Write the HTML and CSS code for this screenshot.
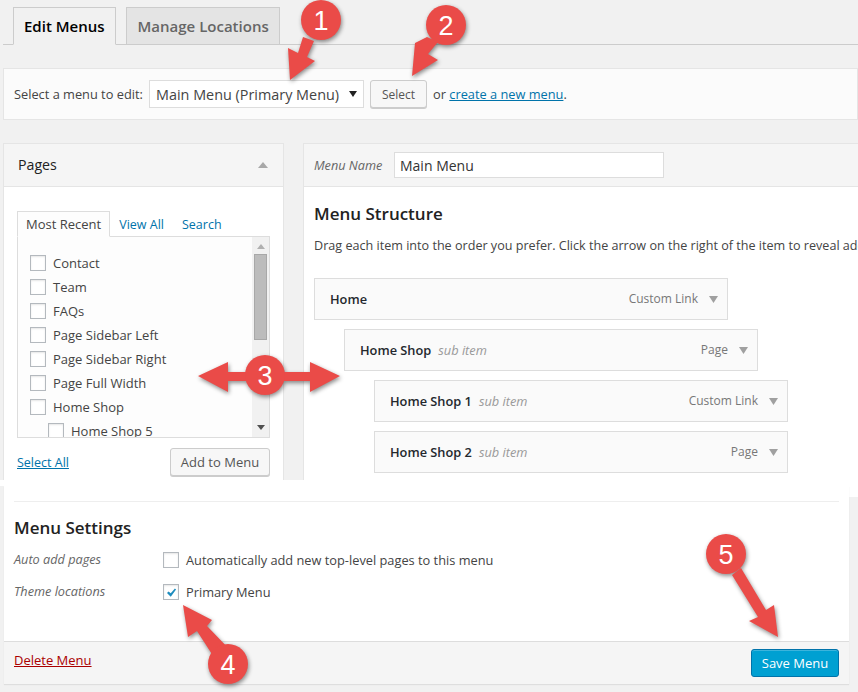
FILE: index.html
```html
<!DOCTYPE html>
<html lang="en">
<head>
    <meta charset="UTF-8">
    <meta name="viewport" content="width=device-width, initial-scale=1.0">
    <title>Edit Menus</title>
    <link rel="stylesheet" href="styles.css">
</head>
<body>
    <div class="top">
        <div class="nav-tabs">
            <a class="nav-tab active">Edit Menus</a>
            <a class="nav-tab">Manage Locations</a>
        </div>

        <div class="select-bar">
            <span class="select-label">Select a menu to edit:</span>
            <div class="select">
                <span>Main Menu (Primary Menu)</span>
                <svg width="8" height="6" viewBox="0 0 8 6"><path d="M0 0h8L4 6z" fill="#222"/></svg>
            </div>
            <button class="btn btn-select">Select</button>
            <span>or <a class="link">create a new menu</a>.</span>
        </div>

        <div class="columns">
            <div class="side-box">
                <div class="box-head">
                    <h3>Pages</h3>
                    <svg width="10" height="6" viewBox="0 0 10 6"><path d="M0 6h10L5 0z" fill="#a8a8a8"/></svg>
                </div>
                <div class="side-body">
                    <div class="mini-tabs">
                        <span class="mini-tab active">Most Recent</span>
                        <span class="mini-tab">View All</span>
                        <span class="mini-tab">Search</span>
                    </div>
                    <div class="list-box">
                        <ul class="page-list">
                            <li><span class="cb"></span>Contact</li>
                            <li><span class="cb"></span>Team</li>
                            <li><span class="cb"></span>FAQs</li>
                            <li><span class="cb"></span>Page Sidebar Left</li>
                            <li><span class="cb"></span>Page Sidebar Right</li>
                            <li><span class="cb"></span>Page Full Width</li>
                            <li><span class="cb"></span>Home Shop</li>
                            <li class="child"><span class="cb"></span>Home Shop 5</li>
                        </ul>
                        <div class="scrollbar">
                            <svg width="8" height="5" viewBox="0 0 8 5"><path d="M0 5h8L4 0z" fill="#b0b0b0"/></svg>
                            <div class="thumb"></div>
                            <svg class="scroll-down" width="8" height="5" viewBox="0 0 8 5"><path d="M0 0h8L4 5z" fill="#505050"/></svg>
                        </div>
                    </div>
                    <div class="side-actions">
                        <a class="link">Select All</a>
                        <button class="btn btn-add">Add to Menu</button>
                    </div>
                </div>
            </div>

            <div class="main-box">
                <div class="box-head name-head">
                    <label>Menu Name</label>
                    <input class="name-input" type="text" value="Main Menu">
                </div>
                <div class="main-body">
                    <h3 class="heading">Menu Structure</h3>
                    <p class="hint">Drag each item into the order you prefer. Click the arrow on the right of the item to reveal additional configuration options.</p>
                    <div class="item">
                        <b>Home</b>
                        <span class="item-type">Custom Link</span>
                        <svg width="9" height="7" viewBox="0 0 9 7"><path d="M0 0h9L4.5 7z" fill="#a0a0a0"/></svg>
                    </div>
                    <div class="item depth-1">
                        <b>Home Shop</b><i>sub item</i>
                        <span class="item-type">Page</span>
                        <svg width="9" height="7" viewBox="0 0 9 7"><path d="M0 0h9L4.5 7z" fill="#a0a0a0"/></svg>
                    </div>
                    <div class="item depth-2">
                        <b>Home Shop 1</b><i>sub item</i>
                        <span class="item-type">Custom Link</span>
                        <svg width="9" height="7" viewBox="0 0 9 7"><path d="M0 0h9L4.5 7z" fill="#a0a0a0"/></svg>
                    </div>
                    <div class="item depth-2">
                        <b>Home Shop 2</b><i>sub item</i>
                        <span class="item-type">Page</span>
                        <svg width="9" height="7" viewBox="0 0 9 7"><path d="M0 0h9L4.5 7z" fill="#a0a0a0"/></svg>
                    </div>
                </div>
            </div>
        </div>
    </div>

    <div class="white-band"></div>

    <div class="bottom">
        <div class="settings-box">
            <div class="settings-body">
                <h3 class="heading">Menu Settings</h3>
                <div class="setting-row">
                    <span class="setting-label">Auto add pages</span>
                    <span class="cb"></span>
                    <span>Automatically add new top-level pages to this menu</span>
                </div>
                <div class="setting-row">
                    <span class="setting-label">Theme locations</span>
                    <span class="cb">
                        <svg width="11" height="9" viewBox="0 0 14 12"><path d="M1 6.5l2-2L6 7l5.5-6.5 1.6 1.5L6 11.5z" fill="#1e8cbe"/></svg>
                    </span>
                    <span>Primary Menu</span>
                </div>
            </div>
            <div class="settings-foot">
                <a class="delete">Delete Menu</a>
                <button class="btn-save">Save Menu</button>
            </div>
        </div>
    </div>

    <svg class="notes" width="858" height="692" viewBox="0 0 858 692">
        <g class="note-shape">
            <path d="M303 37L298 53L288 48L290 80L315 61L307 57L314 41z"/>
            <circle cx="321" cy="20" r="20"/>
        </g>
        <g class="note-shape">
            <path d="M427 37L415 43L412 76L438 60L428 54L438 42z"/>
            <circle cx="446" cy="25" r="20"/>
        </g>
        <g class="note-shape">
            <path d="M198 376L228 362V372H310V362L340 376L310 392V381H228V392z"/>
            <circle cx="265" cy="375" r="20"/>
        </g>
        <g class="note-shape">
            <path d="M183 605L188 637L197 631L217 662L232 652L207 626L212 620z"/>
            <circle cx="228" cy="664" r="20"/>
        </g>
        <g class="note-shape">
            <path d="M732 575L758 617L749 621L778 637L774 605L766 610L741 568z"/>
            <circle cx="726" cy="554" r="20"/>
        </g>
        <text x="321" y="30">1</text>
        <text x="446" y="35">2</text>
        <text x="265" y="385">3</text>
        <text x="228" y="674">4</text>
        <text x="726" y="564">5</text>
    </svg>
</body>
</html>
```

FILE: styles.css
```css
* {
    box-sizing: border-box;
}
body {
    position: relative;
    width: 858px;
    height: 692px;
    margin: 0;
    overflow: hidden;
    background-color: #f1f1f1;
    color: #444;
    font-family: "Open Sans", sans-serif;
    font-size: 12.8px;
}
h3, p, ul {
    margin: 0;
    padding: 0;
}
.link {
    color: #0073aa;
    text-decoration: underline;
}

/* top tabs */
.top {
    height: 480px;
    overflow: hidden;
}
.nav-tabs {
    display: flex;
    gap: 10px;
    height: 45px;
    margin-left: 3px;
    padding: 7px 0 0 10px;
    border-bottom: 1px solid #ccc;
}
.nav-tab {
    height: 38px;
    padding: 0 10px 0 11px;
    border: 1px solid #ccc;
    background-color: #e4e4e4;
    color: #666;
    font-size: 15px;
    font-weight: 600;
    line-height: 37px;
}
.nav-tab.active {
    padding: 0 10px;
    border-bottom-color: #f1f1f1;
    background-color: #f1f1f1;
    color: #000;
}

/* menu picker */
.select-bar {
    display: flex;
    align-items: center;
    height: 52px;
    margin: 23px 0 0 3px;
    padding: 0 0 0 10px;
    border: 1px solid #e5e5e5;
    background-color: #fbfbfb;
}
.select-label {
    width: 135px;
}
.select {
    display: flex;
    align-items: center;
    justify-content: space-between;
    width: 215px;
    height: 28px;
    margin-right: 6px;
    padding: 0 6px;
    border: 1px solid #ddd;
    background-color: #fff;
    font-size: 14.4px;
}
.btn {
    height: 28px;
    padding: 0;
    border: 1px solid #ccc;
    border-radius: 3px;
    background-color: #f7f7f7;
    box-shadow: 0 1px 0 #ccc;
    color: #555;
    font-family: inherit;
    font-size: 13px;
}
.btn-select {
    width: 57px;
    margin-right: 6px;
    font-size: 12px;
}

/* two columns */
.columns {
    display: flex;
    gap: 19px;
    margin: 23px 0 0 3px;
}
.side-box {
    flex: 0 0 281px;
    height: 337px;
    border: 1px solid #e5e5e5;
    border-bottom: 0;
    background-color: #fff;
}
.box-head {
    display: flex;
    align-items: center;
    justify-content: space-between;
    height: 43px;
    padding: 0 15px 0 14px;
    border-bottom: 1px solid #e5e5e5;
    background-color: #f5f5f5;
}
.box-head h3 {
    margin-top: -1px;
    color: #222;
    font-size: 14.2px;
    font-weight: 400;
}
.side-body {
    padding: 24px 13px 0;
}
.mini-tabs {
    display: flex;
    position: relative;
    height: 26px;
    margin-bottom: -1px;
    font-size: 12.5px;
}
.mini-tab {
    padding: 0 9px;
    color: #0073aa;
    line-height: 27px;
}
.mini-tab.active {
    position: relative;
    height: 26px;
    padding: 0 8px;
    border: 1px solid #ddd;
    border-bottom-color: #fdfdfd;
    background-color: #fdfdfd;
    color: #444;
    font-size: 13px;
    line-height: 25px;
}
.list-box {
    display: flex;
    height: 202px;
    border: 1px solid #ddd;
    background-color: #fdfdfd;
}
.page-list {
    flex: 1;
    overflow: hidden;
    padding: 14px 0 0 12px;
    list-style: none;
    font-size: 13px;
}
.page-list li {
    display: flex;
    align-items: center;
    gap: 7px;
    height: 24px;
}
.page-list li.child {
    margin-left: 18px;
}
.cb {
    display: flex;
    flex: none;
    align-items: center;
    justify-content: center;
    width: 16px;
    height: 16px;
    border: 1px solid #b4b9be;
    background-color: #fff;
    box-shadow: inset 0 1px 2px rgba(0, 0, 0, 0.1);
}
.scrollbar {
    display: flex;
    flex: 0 0 17px;
    flex-direction: column;
    align-items: center;
    padding-top: 7px;
    background-color: #f1f1f1;
}
.thumb {
    width: 13px;
    height: 86px;
    margin-top: 5px;
    border: 1px solid #a8a8a8;
    background-color: #bcbcbc;
}
.scroll-down {
    margin-top: auto;
    margin-bottom: 7px;
}
.side-actions {
    display: flex;
    align-items: center;
    justify-content: space-between;
    margin-top: 10px;
}
.side-actions .link {
    font-size: 12.5px;
}
.btn-add {
    width: 100px;
}

/* menu structure */
.main-box {
    flex: 0 0 600px;
    height: 337px;
    border: 1px solid #e5e5e5;
    border-bottom: 0;
    background-color: #fff;
}
.name-head {
    justify-content: flex-start;
    padding: 0 0 0 10px;
}
.name-head label {
    width: 80px;
    color: #666;
    font-size: 12.7px;
    font-style: italic;
}
.name-input {
    width: 270px;
    height: 26px;
    padding: 0 5px;
    border: 1px solid #ddd;
    color: #333;
    font-family: inherit;
    font-size: 14px;
}
.main-body {
    padding: 17px 0 0 10px;
}
.heading {
    color: #222;
    font-size: 17px;
    font-weight: 600;
    line-height: 20px;
}
.hint {
    margin: 13px 0 23px;
    font-size: 12.6px;
    line-height: 18px;
    white-space: nowrap;
}
.item {
    display: flex;
    align-items: center;
    width: 414px;
    height: 42px;
    margin-bottom: 9px;
    padding: 0 9px 0 15px;
    border: 1px solid #ddd;
    background-color: #fafafa;
}
.item b {
    color: #23282d;
    font-weight: 600;
}
.item i {
    margin-left: 7px;
    color: #999;
}
.item-type {
    margin: -2px 11px 0 auto;
    color: #777;
    font-size: 12px;
}
.depth-1 {
    margin-left: 30px;
}
.depth-2 {
    margin-left: 60px;
}

/* pasted lower half */
.white-band {
    height: 6px;
    background-color: #fff;
}
.bottom {
    height: 206px;
    padding-left: 4px;
    background:
        linear-gradient(#f1f1f1, #f1f1f1) left / 4px 100% no-repeat,
        linear-gradient(#fff 11px, #f1f1f1 11px);
}
.settings-box {
    display: flex;
    flex-direction: column;
    width: 845px;
    height: 198px;
    background-color: #fff;
    box-shadow: 0 1px 1px rgba(0, 0, 0, 0.08);
}
.settings-body {
    flex: 1;
    margin: 15px 10px 0;
    padding-top: 16px;
    border-top: 1px solid #eee;
}
.settings-body .heading {
    margin-bottom: 6px;
}
.setting-row {
    display: flex;
    align-items: center;
    gap: 7px;
    height: 32px;
}
.setting-label {
    width: 142px;
    margin-top: -2px;
    color: #666;
    font-size: 12.7px;
    font-style: italic;
}
.settings-foot {
    display: flex;
    align-items: center;
    justify-content: space-between;
    flex: 0 0 43px;
    padding: 0 10px;
    border-top: 1px solid #ddd;
    background-color: #f5f5f5;
}
.delete {
    margin-top: -6px;
    color: #a00;
    font-size: 13px;
    text-decoration: underline;
}
.btn-save {
    width: 88px;
    height: 28px;
    padding: 0;
    border: 1px solid #0073aa;
    border-radius: 3px;
    background-color: #00a0d2;
    box-shadow: inset 0 1px 0 rgba(120, 200, 230, 0.5);
    color: #fff;
    font-family: inherit;
    font-size: 13px;
}

/* red call-outs drawn over the screenshot */
.notes {
    position: absolute;
    top: 0;
    left: 0;
    pointer-events: none;
}
.note-shape {
    fill: #ea4b48;
    filter: drop-shadow(1px 2px 2px rgba(0, 0, 0, 0.45));
}
.notes text {
    fill: #fff;
    font-family: "Liberation Sans", sans-serif;
    font-size: 27px;
    text-anchor: middle;
}
```
